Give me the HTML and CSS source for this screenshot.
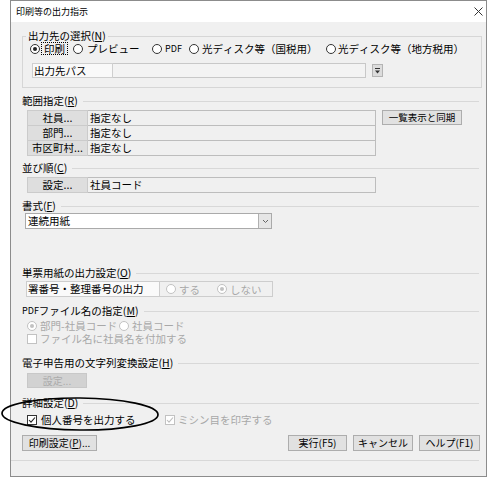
FILE: index.html
```html
<!DOCTYPE html>
<html lang="ja">
<head>
<meta charset="utf-8">
<title>印刷等の出力指示</title>
<link rel="stylesheet" href="styles.css">
</head>
<body>
<div class="window">
  <div class="titlebar">
    <span class="title">印刷等の出力指示</span>
    <svg class="close" width="9" height="9" viewBox="0 0 9 9"><path d="M0.5 0.5 L8.5 8.5 M8.5 0.5 L0.5 8.5" stroke="#333" stroke-width="1" fill="none"/></svg>
  </div>
  <div class="content">
    <div class="group">
      <div class="legend">出力先の選択(<u>N</u>)</div>
      <div class="radios dest">
        <div class="opt w1"><span class="radio on"></span><span class="focus">印刷</span></div>
        <div class="opt w2"><span class="radio"></span><span class="t4">プレビュー</span></div>
        <div class="opt w3"><span class="radio"></span><span class="t3 latin">PDF</span></div>
        <div class="opt w4"><span class="radio"></span><span class="t3">光ディスク等（国税用）</span></div>
        <div class="opt"><span class="radio"></span><span class="t2">光ディスク等（地方税用）</span></div>
      </div>
      <div class="pathrow">
        <div class="pathlabel">出力先パス</div>
        <div class="pathinput"></div>
        <div class="pathbtn"><svg width="9" height="9" viewBox="0 0 9 9"><path d="M2 2.5 H7" stroke="#333" stroke-width="1"/><path d="M2 4.5 H7 L4.5 7.5 Z" fill="#333"/></svg></div>
      </div>
    </div>

    <div class="sec s1">範囲指定(<u>R</u>)</div>
    <div class="range">
      <div class="rtable">
        <div class="rrow"><div class="rbtn">社員...</div><div class="rval">指定なし</div></div>
        <div class="rrow"><div class="rbtn">部門...</div><div class="rval">指定なし</div></div>
        <div class="rrow"><div class="rbtn">市区町村...</div><div class="rval">指定なし</div></div>
      </div>
      <div class="btn sync">一覧表示と同期</div>
    </div>

    <div class="sec s2">並び順(<u>C</u>)</div>
    <div class="rrow sortrow"><div class="rbtn">設定...</div><div class="rval">社員コード</div></div>

    <div class="sec s3">書式(<u>F</u>)</div>
    <div class="select">
      <span class="seltext">連続用紙</span>
      <span class="selarrow"><svg width="11" height="12" viewBox="0 0 11 12"><path d="M3 5 L5.5 7.5 L8 5" stroke="#666" stroke-width="1" fill="none"/></svg></span>
    </div>

    <div class="sec s4">単票用紙の出力設定(<u>O</u>)</div>
    <div class="tanrow">
      <div class="tanlabel">署番号・整理番号の出力</div>
      <div class="tanopts">
        <div class="opt w5"><span class="radio dis"></span><span class="t3 distext">する</span></div>
        <div class="opt"><span class="radio dis on"></span><span class="t3 distext">しない</span></div>
      </div>
    </div>

    <div class="sec s5"><span class="latin">PDF</span>ファイル名の指定(<u>M</u>)</div>
    <div class="radios pdfrow">
      <div class="opt w6"><span class="radio dis on"></span><span class="t3 distext">部門-社員コード</span></div>
      <div class="opt"><span class="radio dis"></span><span class="t3 distext">社員コード</span></div>
    </div>
    <div class="checkrow small">
      <span class="check dis"></span><span class="t3 distext">ファイル名に社員名を付加する</span>
    </div>

    <div class="sec s6">電子申告用の文字列変換設定(<u>H</u>)</div>
    <div class="btn disbtn">設定...</div>

    <div class="sec s7">詳細設定(<u>D</u>)</div>
    <div class="checkrow detail">
      <div class="opt w7">
        <span class="check"><svg width="8" height="8" viewBox="0 0 8 8"><path d="M1 4 L3 6.2 L7 1.5" stroke="#222" stroke-width="1.1" fill="none"/></svg></span><span class="t4">個人番号を出力する</span>
      </div>
      <div class="opt">
        <span class="check dis"><svg width="8" height="8" viewBox="0 0 8 8"><path d="M1 4 L3 6.2 L7 1.5" stroke="#bdbdbd" stroke-width="1.1" fill="none"/></svg></span><span class="t3 distext">ミシン目を印字する</span>
      </div>
    </div>

    <div class="footer">
      <div class="btn b-print">印刷設定(<u>P</u>)...</div>
      <div class="rightbtns">
        <div class="btn b-run">実行(F5)</div>
        <div class="btn b-cancel">キャンセル</div>
        <div class="btn b-help">ヘルプ(F1)</div>
      </div>
    </div>
  </div>
  <div class="statusbar"></div>
</div>
<svg class="ellipse" width="164" height="40" viewBox="0 0 164 40"><ellipse cx="80" cy="19" rx="78" ry="16" transform="rotate(0.5 80 19)" stroke="#000" stroke-width="1.7" fill="none"/></svg>
</body>
</html>
```

FILE: styles.css
```css
body {
  margin: 0;
  background: #fff;
  font-family: "Noto Sans CJK JP", "Noto Sans", sans-serif;
  font-size: 10.5px;
  font-kerning: none;
  color: #000;
  position: relative;
}

.latin {
  font-size: 9px;
}

.window {
  margin-left: 10px;
  width: 477px;
  height: 477px;
  box-sizing: border-box;
  border: 1px solid #8c8c8c;
  background: #f0f0f0;
  display: flex;
  flex-direction: column;
}

.titlebar {
  height: 21px;
  background: #fff;
  display: flex;
  align-items: center;
  justify-content: space-between;
  padding: 0 3px 0 5px;
  font-size: 9px;
  flex: none;
}

.content {
  padding: 0 7px 0 11px;
  display: flex;
  flex-direction: column;
  align-items: flex-start;
}

.group {
  margin-top: 14px;
  margin-right: -3px;
  align-self: stretch;
  height: 52px;
  box-sizing: border-box;
  border: 1px solid #d6d6d6;
  display: flex;
  flex-direction: column;
  align-items: flex-start;
}

.legend {
  margin: -7px 0 0 3px;
  padding: 0 2px;
  background: #f0f0f0;
  height: 12px;
  line-height: 12px;
}

.radios {
  display: flex;
  align-items: center;
  height: 14px;
  line-height: 14px;
}

.dest {
  margin: 0 0 0 7px;
  height: 13px;
  line-height: 13px;
}

.opt {
  display: flex;
  align-items: center;
  flex: none;
  white-space: nowrap;
}

.w1 { width: 43px; }
.w2 { width: 79px; }
.w3 { width: 37px; }
.w4 { width: 137px; }
.w5 { width: 51px; }
.w6 { width: 92px; }
.w7 { width: 138px; }

.t2 { margin-left: 2px; }
.t3 { margin-left: 3px; }
.t4 { margin-left: 4px; }

.radio {
  width: 10px;
  height: 10px;
  box-sizing: border-box;
  border: 1px solid #333;
  border-radius: 50%;
  background: #fff;
  position: relative;
  flex: none;
}

.radio.on::after {
  content: "";
  position: absolute;
  left: 2px;
  top: 2px;
  width: 4px;
  height: 4px;
  border-radius: 50%;
  background: #222;
}

.radio.dis {
  border-color: #c2c2c2;
}

.radio.dis.on::after {
  background: #c2c2c2;
}

.distext {
  color: #a8a8a8;
}

.focus {
  margin-left: 1px;
  padding: 0 2px;
  border: 1px dotted #000;
  line-height: 11px;
}

.pathrow {
  margin: 8px 0 0 9px;
  display: flex;
  align-items: center;
  height: 15px;
}

.pathlabel {
  width: 81px;
  height: 15px;
  box-sizing: border-box;
  border: 1px solid #cfcfcf;
  background: #f9f9f9;
  line-height: 13px;
  padding-left: 1px;
}

.pathinput {
  width: 253px;
  height: 15px;
  box-sizing: border-box;
  border: 1px solid #c8c8c8;
  border-left: none;
  background: #f3f3f3;
}

.pathbtn {
  margin-left: 6px;
  width: 11px;
  height: 13px;
  box-sizing: border-box;
  border: 1px solid #b4b4b4;
  background: #dcdcdc;
  display: flex;
  align-items: center;
  justify-content: center;
}

.sec {
  align-self: stretch;
  display: flex;
  align-items: center;
  height: 14px;
  line-height: 14px;
  white-space: nowrap;
}

.sec::after {
  content: "";
  flex: 1;
  border-top: 1px solid #d8d8d8;
  margin-left: 5px;
}

.s1 { margin-top: 6px; }
.s2 { margin-top: 5px; }
.s3 { margin-top: 6px; }
.s4 { margin-top: 37px; }
.s5 { margin-top: 7px; }
.s6 { margin-top: 11px; }
.s7 { margin-top: 8px; }

.range {
  margin: 2px 0 0 5px;
  display: flex;
  align-items: flex-start;
}

.rtable {
  display: flex;
  flex-direction: column;
}

.rrow {
  display: flex;
  height: 16px;
}

.rrow + .rrow {
  margin-top: -1px;
}

.rbtn {
  width: 61px;
  height: 16px;
  box-sizing: border-box;
  border: 1px solid #cbcbcb;
  background: #dedede;
  text-align: center;
  line-height: 14px;
  white-space: nowrap;
}

.rval {
  width: 288px;
  height: 16px;
  box-sizing: border-box;
  border: 1px solid #bdbdbd;
  border-left: none;
  background: #f0f0f0;
  padding-left: 2px;
  line-height: 14px;
}

.sortrow {
  margin: 2px 0 0 5px;
}

.btn {
  box-sizing: border-box;
  border: 1px solid #adadad;
  background: #e1e1e1;
  text-align: center;
  font-size: 10px;
  white-space: nowrap;
}

.sync {
  margin-left: 6px;
  width: 80px;
  height: 15px;
  line-height: 13px;
  font-size: 9.5px;
}

.select {
  margin-left: 3px;
  width: 247px;
  height: 16px;
  box-sizing: border-box;
  border: 1px solid #aaaaaa;
  background: #fff;
  display: flex;
  justify-content: space-between;
}

.seltext {
  padding-left: 2px;
  line-height: 14px;
}

.selarrow {
  width: 13px;
  box-sizing: border-box;
  border-left: 1px solid #b0b0b0;
  background: #e6e6e6;
  display: flex;
  align-items: center;
  justify-content: center;
}

.tanrow {
  margin: 1px 0 0 4px;
  display: flex;
  height: 16px;
}

.tanlabel {
  width: 134px;
  box-sizing: border-box;
  border: 1px solid #cdcdcd;
  background: #fafafa;
  padding-left: 1px;
  line-height: 14px;
  white-space: nowrap;
}

.tanopts {
  width: 113px;
  box-sizing: border-box;
  border: 1px solid #cdcdcd;
  border-left: none;
  display: flex;
  align-items: center;
  padding-left: 6px;
}

.pdfrow {
  margin: 1px 0 0 5px;
  height: 13px;
  line-height: 12px;
}

.checkrow {
  display: flex;
  align-items: center;
  margin-left: 5px;
  white-space: nowrap;
}

.checkrow.small {
  height: 13px;
  line-height: 12px;
}

.check {
  width: 10px;
  height: 10px;
  box-sizing: border-box;
  border: 1px solid #333;
  background: #fff;
  display: flex;
  align-items: center;
  justify-content: center;
  flex: none;
}

.check.dis {
  border-color: #c2c2c2;
}

.disbtn {
  margin: 3px 0 0 5px;
  width: 60px;
  height: 15px;
  line-height: 13px;
  background: #d2d2d2;
  border-color: #c8c8c8;
  color: #ababab;
}

.detail {
  margin-top: 3px;
  height: 14px;
  line-height: 14px;
}

.footer {
  align-self: stretch;
  margin-top: 8px;
  margin-right: -1px;
  display: flex;
  justify-content: space-between;
}

.footer .btn {
  height: 16px;
  line-height: 14px;
}

.rightbtns {
  display: flex;
  gap: 6px;
}

.b-print { width: 75px; }
.b-run { width: 59px; }
.b-cancel { width: 60px; }
.b-help { width: 61px; }

.statusbar {
  margin: 9px 7px 0 0;
  border-top: 1px solid #d8d8d8;
  flex: 1;
}

.ellipse {
  position: absolute;
  left: 0;
  top: 395px;
}
```
